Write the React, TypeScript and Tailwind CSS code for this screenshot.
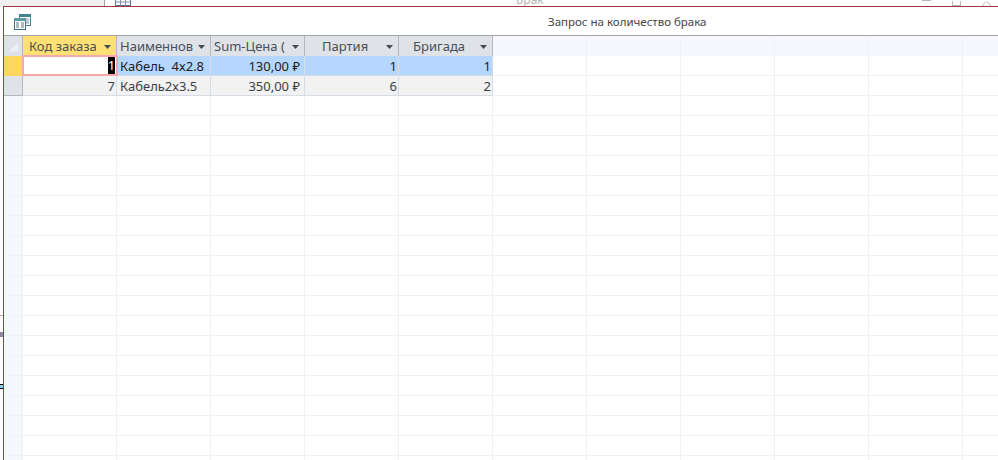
import React from "react";

const font = { fontFamily: '"Noto Sans", "Open Sans", sans-serif' };

const columns = [
  { title: "Код заказа", headCls: "w-[94px] bg-[#ffe074] pl-[6px]", textW: "w-[75px]" },
  { title: "Наименнов", headCls: "w-[94px] bg-[#dfe2e7] pl-[3px]", textW: "w-[78px]" },
  { title: "Sum-Цена (", headCls: "w-[94px] bg-[#dfe2e7] pl-[3px]", textW: "w-[78px]" },
  { title: "Партия", headCls: "w-[94px] bg-[#dfe2e7] pl-[17px]", textW: "w-[64px]" },
  { title: "Бригада", headCls: "w-[94px] bg-[#dfe2e7] pl-[14px]", textW: "w-[67px]" },
];

const emptyCols = [0, 1, 2, 3, 4, 5];
const emptyRows = Array.from({ length: 19 }, (_, i) => i);

function Arrow() {
  return (
    <svg width="7" height="4" viewBox="0 0 7 4" className="shrink-0">
      <path d="M0 0h7L3.5 4z" fill="#444b55" />
    </svg>
  );
}

function QueryIcon() {
  return (
    <svg width="17" height="16" viewBox="0 0 17 16" className="shrink-0">
      <rect x="5.5" y="0.5" width="11" height="11" fill="#fff" stroke="#4f7f92" />
      <rect x="5" y="0" width="12" height="3" fill="#3f8490" />
      <path d="M8 5h3M12 5h3M8 7h3M12 7h3M8 9h3M12 9h3" stroke="#7a9bb0" />
      <rect x="0.5" y="4.5" width="11" height="11" fill="#fff" stroke="#3f6f88" />
      <rect x="0" y="4" width="12" height="3" fill="#5d9aa6" />
      <path d="M2 9h3M7 9h3M2 11h3M7 11h3M2 13h3M7 13h3" stroke="#58788f" />
    </svg>
  );
}

function EmptyCells({ cls }: { cls: string }) {
  return (
    <>
      {emptyCols.map((c) => (
        <div key={c} className={`w-[94px] shrink-0 border-r border-[#f0f1f5] ${cls}`} />
      ))}
    </>
  );
}

function DataCell({ children, cls }: { children: React.ReactNode; cls: string }) {
  return (
    <div className={`w-[94px] shrink-0 flex items-center pt-[2px] overflow-hidden whitespace-nowrap border-r border-b border-[#d6dce6] ${cls}`}>
      {children}
    </div>
  );
}

export default function App() {
  return (
    <div className="w-[998px] h-[460px] overflow-hidden bg-white text-[13px] text-[#3a3f47] flex flex-col" style={font}>
      {/* окно за формой */}
      <div className="h-[6px] shrink-0 flex items-end overflow-hidden">
        <div className="w-[105px] h-full bg-[#f0f0f0] border-r border-[#a0a0a0] shrink-0" />
        <svg width="16" height="6" viewBox="0 0 16 6" className="ml-[10px] shrink-0">
          <rect x="0.5" y="-4" width="15" height="9.5" fill="#fff" stroke="#5f6f90" />
          <path d="M0 2h16M5.5 0v6M10.5 0v6" stroke="#7f8fb0" />
        </svg>
        <div className="ml-[385px] w-[40px] h-full relative shrink-0">
          <span className="absolute left-0 bottom-[-1px] text-[12px] leading-[14px] text-[#b4b4b4]">Брак</span>
        </div>
        <div className="ml-auto flex items-end gap-[21px] pr-[7px] h-full">
          <div className="w-[9px] h-px bg-[#b8b8b8] mb-[5px]" />
          <div className="w-[9px] h-[5px] border-x border-b border-[#b8b8b8]" />
          <svg width="9" height="5" viewBox="0 0 9 5">
            <path d="M0 5L4 0.5M9 5L5 0.5" stroke="#b8b8b8" />
          </svg>
        </div>
      </div>

      <div className="flex-1 flex min-h-0">
        <div className="w-[3px] shrink-0 flex flex-col bg-white">
          <div className="h-[309px] shrink-0" />
          <div className="h-px bg-[#b8b0a0]" />
          <div className="h-[16px]" />
          <div className="h-[5px] bg-[#8c88a8]" />
          <div className="h-[47px]" />
          <div className="h-[5px] border-y border-black bg-[#7fd4e8]" />
        </div>

        <div className="flex-1 min-w-0 flex flex-col border-l border-t border-[#a4373a]">
          {/* заголовок */}
          <div className="h-[28px] shrink-0 flex items-center pl-[10px] pt-px">
            <QueryIcon />
            <span className="ml-[517px] text-[11.5px] text-[#444]">Запрос на количество брака</span>
          </div>

          {/* шапка таблицы */}
          <div className="h-[21px] shrink-0 flex border-t border-[#a5a5a5]">
            <div className="w-[19px] shrink-0 bg-[#dfe2e7] border-r border-[#b4b8be] flex items-center justify-center">
              <svg width="12" height="11" viewBox="0 0 12 11">
                <path d="M0 11L12 0V11z" fill="#eceef1" stroke="#cdd1d6" strokeWidth="0.5" />
              </svg>
            </div>
            {columns.map((col) => (
              <div key={col.title} className={`${col.headCls} shrink-0 flex items-center pt-px border-r border-[#b4b8be] whitespace-nowrap overflow-hidden text-[#4a4f57]`}>
                <span className={`${col.textW} shrink-0 overflow-hidden`}>{col.title}</span>
                <Arrow />
              </div>
            ))}
            <EmptyCells cls="bg-[#f6f7fd]" />
          </div>

          {/* строка 1 */}
          <div className="h-[20px] shrink-0 flex">
            <div className="w-[19px] shrink-0 bg-[#ffd75e]" />
            <div className="w-[96px] h-[21px] shrink-0 -ml-px -mr-px -mt-px bg-white border-2 border-[#f5a9ad] flex items-center justify-end pr-px z-10">
              <span className="bg-black text-white h-[17px] w-[7px] leading-[17px] flex justify-center">1</span>
            </div>
            <DataCell cls="bg-[#b5d7ff] pl-[3px] text-[#1c1c1c]">Кабель&nbsp;&nbsp;4х2.8</DataCell>
            <DataCell cls="bg-[#b5d7ff] justify-end pr-[4px] text-[#1c1c1c]">130,00 ₽</DataCell>
            <DataCell cls="bg-[#b5d7ff] justify-end pr-[1px] text-[#1c1c1c]">1</DataCell>
            <DataCell cls="bg-[#b5d7ff] justify-end pr-[1px] text-[#1c1c1c]">1</DataCell>
            <EmptyCells cls="border-b" />
          </div>

          {/* строка 2 */}
          <div className="h-[20px] shrink-0 flex">
            <div className="w-[19px] shrink-0 bg-[#dfe2e7] border-r border-b border-[#b4b8be]" />
            <DataCell cls="bg-[#f2f2f2] justify-end pr-[1px]">7</DataCell>
            <DataCell cls="bg-[#f2f2f2] pl-[3px]">Кабель2х3.5</DataCell>
            <DataCell cls="bg-[#f2f2f2] justify-end pr-[4px]">350,00 ₽</DataCell>
            <DataCell cls="bg-[#f2f2f2] justify-end pr-[1px]">6</DataCell>
            <DataCell cls="bg-[#f2f2f2] justify-end pr-[1px]">2</DataCell>
            <EmptyCells cls="border-b" />
          </div>

          {/* пустые строки */}
          {emptyRows.map((r) => (
            <div key={r} className="h-[20px] shrink-0 flex border-b border-[#f0f1f5]">
              <div className="w-[19px] shrink-0 bg-[#f6f7fd] border-r border-[#f0f1f5]" />
              {columns.map((col) => (
                <div key={col.title} className="w-[94px] shrink-0 border-r border-[#f0f1f5]" />
              ))}
              <EmptyCells cls="" />
            </div>
          ))}
        </div>
      </div>
    </div>
  );
}
